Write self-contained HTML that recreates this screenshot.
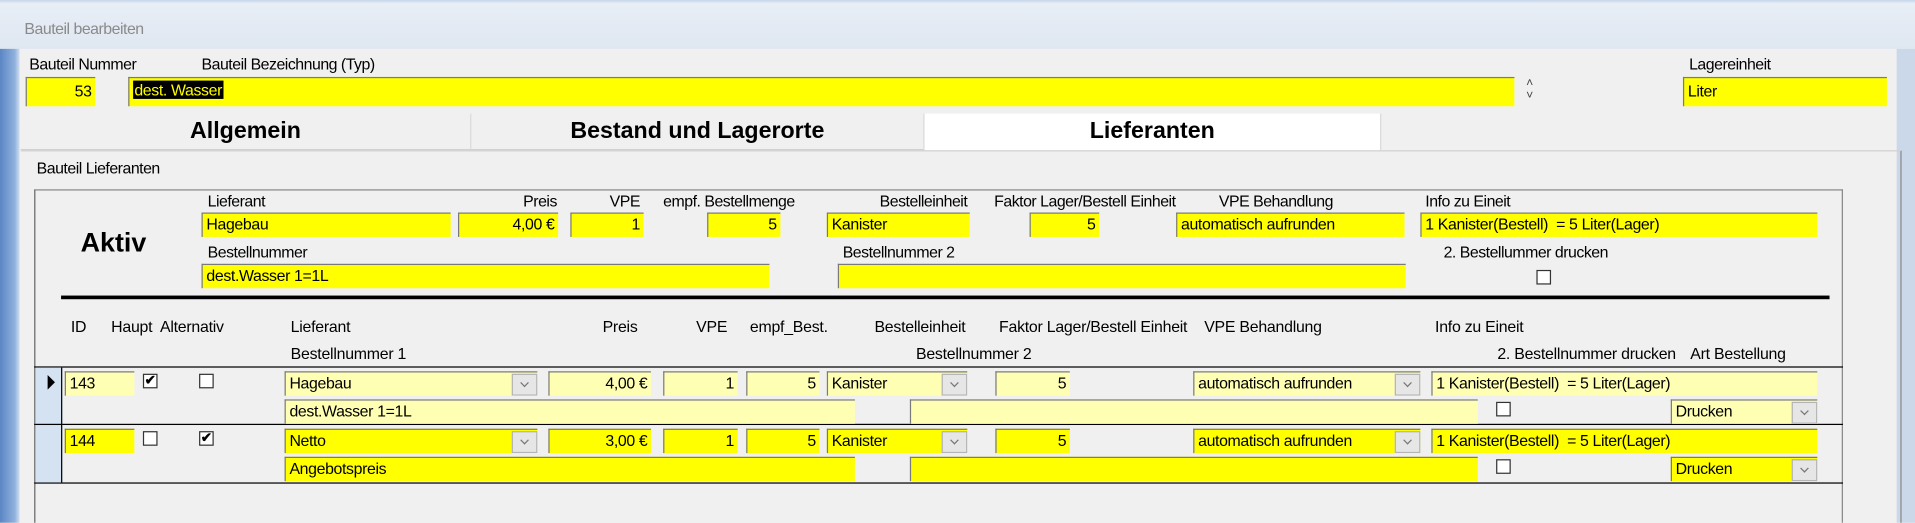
<!DOCTYPE html>
<html><head><meta charset="utf-8"><style>
html,body{margin:0;padding:0;width:1915px;height:522px;overflow:hidden;background:#f0f0f0}
#s{position:absolute;left:0;top:0;width:1568px;height:428px;transform:scale(1.22131);transform-origin:0 0;font-family:"Liberation Sans",Arial,sans-serif;font-size:13px;color:#000}
#s div{position:absolute;box-sizing:border-box}
.l{white-space:nowrap;letter-spacing:-0.4px}
.r{text-align:right}
.f{background:#ffff00;border-top:1px solid #7a7a7a;border-left:1px solid #7a7a7a;height:20px;line-height:18px;padding:0 3px;white-space:nowrap;letter-spacing:-0.3px;overflow:hidden}
.p{background:#ffffb4}
.btn{background:#e6e6e6;border:1px solid #b4b4b4;width:21px;height:18px;top:1px}
.btn:after{content:"";position:absolute;left:7px;top:4px;width:4px;height:4px;border-right:1px solid #777;border-bottom:1px solid #777;transform:rotate(45deg)}
.cb{width:12px;height:12px;border:1px solid #333;background:#fff}
.ck{font-size:11px;line-height:10px;text-align:center;font-weight:bold}
.tab{top:93px;height:30px;font-size:19px;font-weight:bold;text-align:center;line-height:30px;border-right:1px solid #d8d8d8;border-bottom:1px solid #d0d0d0}
.g{font-size:13px;white-space:nowrap;letter-spacing:-0.2px}
</style></head><body><div id="s">
<div style="left:0;top:0;width:1568px;height:40px;background:linear-gradient(#c6d6ea 0,#e8eef6 3px,#dfe7f1 40px)"></div>
<div class="l" style="left:20px;top:16px;font-size:13px;color:#8a8a8a">Bauteil bearbeiten</div>
<div style="left:0;top:40px;width:16px;height:388px;background:linear-gradient(90deg,#5b86c4,#8fb0dc 12px,#d0deef)"></div>
<div style="left:1553px;top:40px;width:15px;height:388px;background:#cad8ea"></div>

<div class="l" style="left:24px;top:45px">Bauteil Nummer</div>
<div class="l" style="left:165px;top:45px">Bauteil Bezeichnung (Typ)</div>
<div class="l" style="left:1383px;top:45px">Lagereinheit</div>
<div class="f r" style="left:21px;top:63px;width:57px;height:24px;line-height:22px">53</div>
<div class="f" style="left:105px;top:63px;width:1135px;height:24px;line-height:20px;padding-left:3px"><span style="background:#000;color:#ff0;padding:0 1px">dest. Wasser</span></div>
<div style="left:1240px;top:64px;width:25px;height:23px;background:#f0f0f0;font-size:10px;line-height:10px;text-align:center;color:#444">˄<br>˅</div>
<div class="f" style="left:1378px;top:63px;width:167px;height:24px;line-height:22px">Liter</div>

<div class="tab" style="left:17px;width:369px;background:#f0f0f0">Allgemein</div>
<div class="tab" style="left:386px;width:371px;background:#f0f0f0">Bestand und Lagerorte</div>
<div class="tab" style="left:757px;width:374px;background:#fff;border-bottom:none">Lieferanten</div>
<div style="left:17px;top:123px;width:1540px;height:305px;border-top:1px solid #d0d0d0;border-right:1px solid #888"></div>
<div class="l" style="left:30px;top:130px">Bauteil Lieferanten</div>

<div style="left:28px;top:155px;width:1481px;height:273px;border-top:1px solid #888;border-left:1px solid #666;border-right:1px solid #888"></div>
<div style="left:66px;top:186px;font-size:22px;font-weight:bold">Aktiv</div>
<div class="l" style="left:170px;top:157px">Lieferant</div>
<div class="l r" style="left:400px;top:157px;width:56px">Preis</div>
<div class="l r" style="left:470px;top:157px;width:54px">VPE</div>
<div class="l" style="left:543px;top:157px">empf. Bestellmenge</div>
<div class="l r" style="left:680px;top:157px;width:112px">Bestelleinheit</div>
<div class="l" style="left:814px;top:157px">Faktor Lager/Bestell Einheit</div>
<div class="l" style="left:998px;top:157px">VPE Behandlung</div>
<div class="l" style="left:1167px;top:157px">Info zu Eineit</div>
<div class="f" style="left:165px;top:174px;width:204px">Hagebau</div>
<div class="f r" style="left:375px;top:174px;width:82px">4,00 €</div>
<div class="f r" style="left:467px;top:174px;width:60px">1</div>
<div class="f r" style="left:579px;top:174px;width:60px">5</div>
<div class="f" style="left:677px;top:174px;width:117px">Kanister</div>
<div class="f r" style="left:843px;top:174px;width:57px">5</div>
<div class="f" style="left:963px;top:174px;width:187px">automatisch aufrunden</div>
<div class="f" style="left:1163px;top:174px;width:325px">1 Kanister(Bestell) &nbsp;= 5 Liter(Lager)</div>
<div class="l" style="left:170px;top:199px">Bestellnummer</div>
<div class="l" style="left:690px;top:199px">Bestellnummer 2</div>
<div class="l" style="left:1182px;top:199px">2. Bestellummer drucken</div>
<div class="f" style="left:165px;top:216px;width:465px">dest.Wasser 1=1L</div>
<div class="f" style="left:686px;top:216px;width:465px"></div>
<div class="cb" style="left:1258px;top:221px"></div>
<div style="left:50px;top:242px;width:1448px;height:3px;background:#000"></div>

<div class="g" style="left:58px;top:260px">ID</div>
<div class="g" style="left:91px;top:260px">Haupt</div>
<div class="g" style="left:131px;top:260px">Alternativ</div>
<div class="g" style="left:238px;top:260px">Lieferant</div>
<div class="g r" style="left:470px;top:260px;width:52px">Preis</div>
<div class="g" style="left:570px;top:260px">VPE</div>
<div class="g" style="left:614px;top:260px">empf_Best.</div>
<div class="g" style="left:716px;top:260px">Bestelleinheit</div>
<div class="g" style="left:818px;top:260px">Faktor Lager/Bestell Einheit</div>
<div class="g" style="left:986px;top:260px">VPE Behandlung</div>
<div class="g" style="left:1175px;top:260px">Info zu Eineit</div>
<div class="g" style="left:238px;top:282px">Bestellnummer 1</div>
<div class="g" style="left:750px;top:282px">Bestellnummer 2</div>
<div class="g" style="left:1226px;top:282px">2. Bestellnummer drucken</div>
<div class="g" style="left:1384px;top:282px">Art Bestellung</div>

<div style="left:28px;top:300px;width:1481px;height:1px;background:#000"></div>
<div style="left:28px;top:347px;width:1481px;height:1px;background:#000"></div>
<div style="left:28px;top:395px;width:1481px;height:1px;background:#000"></div>
<div style="left:29px;top:301px;width:22px;height:94px;background:#d4e2f2"></div>
<div style="left:29px;top:347px;width:22px;height:1px;background:#000"></div>
<div style="left:50px;top:301px;width:1px;height:94px;background:#000"></div>
<div style="left:39px;top:307px;width:0;height:0;border-left:6px solid #000;border-top:6px solid transparent;border-bottom:6px solid transparent"></div>

<!-- row 1 -->
<div class="f p" style="left:53px;top:304px;width:57px">143</div>
<div class="cb ck" style="left:117px;top:306px">✔</div>
<div class="cb" style="left:163px;top:306px"></div>
<div class="f p" style="left:233px;top:304px;width:207px">Hagebau<div class="btn" style="right:0"></div></div>
<div class="f p r" style="left:449px;top:304px;width:84px">4,00 €</div>
<div class="f p r" style="left:543px;top:304px;width:61px">1</div>
<div class="f p r" style="left:611px;top:304px;width:60px">5</div>
<div class="f p" style="left:677px;top:304px;width:115px">Kanister<div class="btn" style="right:0"></div></div>
<div class="f p r" style="left:815px;top:304px;width:61px">5</div>
<div class="f p" style="left:977px;top:304px;width:186px">automatisch aufrunden<div class="btn" style="right:0"></div></div>
<div class="f p" style="left:1172px;top:304px;width:316px">1 Kanister(Bestell) &nbsp;= 5 Liter(Lager)</div>
<div class="f p" style="left:233px;top:327px;width:467px">dest.Wasser 1=1L</div>
<div class="f p" style="left:745px;top:327px;width:465px"></div>
<div class="cb" style="left:1225px;top:329px"></div>
<div class="f p" style="left:1368px;top:327px;width:120px">Drucken<div class="btn" style="right:0"></div></div>

<!-- row 2 -->
<div class="f" style="left:53px;top:351px;width:57px">144</div>
<div class="cb" style="left:117px;top:353px"></div>
<div class="cb ck" style="left:163px;top:353px">✔</div>
<div class="f" style="left:233px;top:351px;width:207px">Netto<div class="btn" style="right:0"></div></div>
<div class="f r" style="left:449px;top:351px;width:84px">3,00 €</div>
<div class="f r" style="left:543px;top:351px;width:61px">1</div>
<div class="f r" style="left:611px;top:351px;width:60px">5</div>
<div class="f" style="left:677px;top:351px;width:115px">Kanister<div class="btn" style="right:0"></div></div>
<div class="f r" style="left:815px;top:351px;width:61px">5</div>
<div class="f" style="left:977px;top:351px;width:186px">automatisch aufrunden<div class="btn" style="right:0"></div></div>
<div class="f" style="left:1172px;top:351px;width:316px">1 Kanister(Bestell) &nbsp;= 5 Liter(Lager)</div>
<div class="f" style="left:233px;top:374px;width:467px">Angebotspreis</div>
<div class="f" style="left:745px;top:374px;width:465px"></div>
<div class="cb" style="left:1225px;top:376px"></div>
<div class="f" style="left:1368px;top:374px;width:120px">Drucken<div class="btn" style="right:0"></div></div>
</div></body></html>
